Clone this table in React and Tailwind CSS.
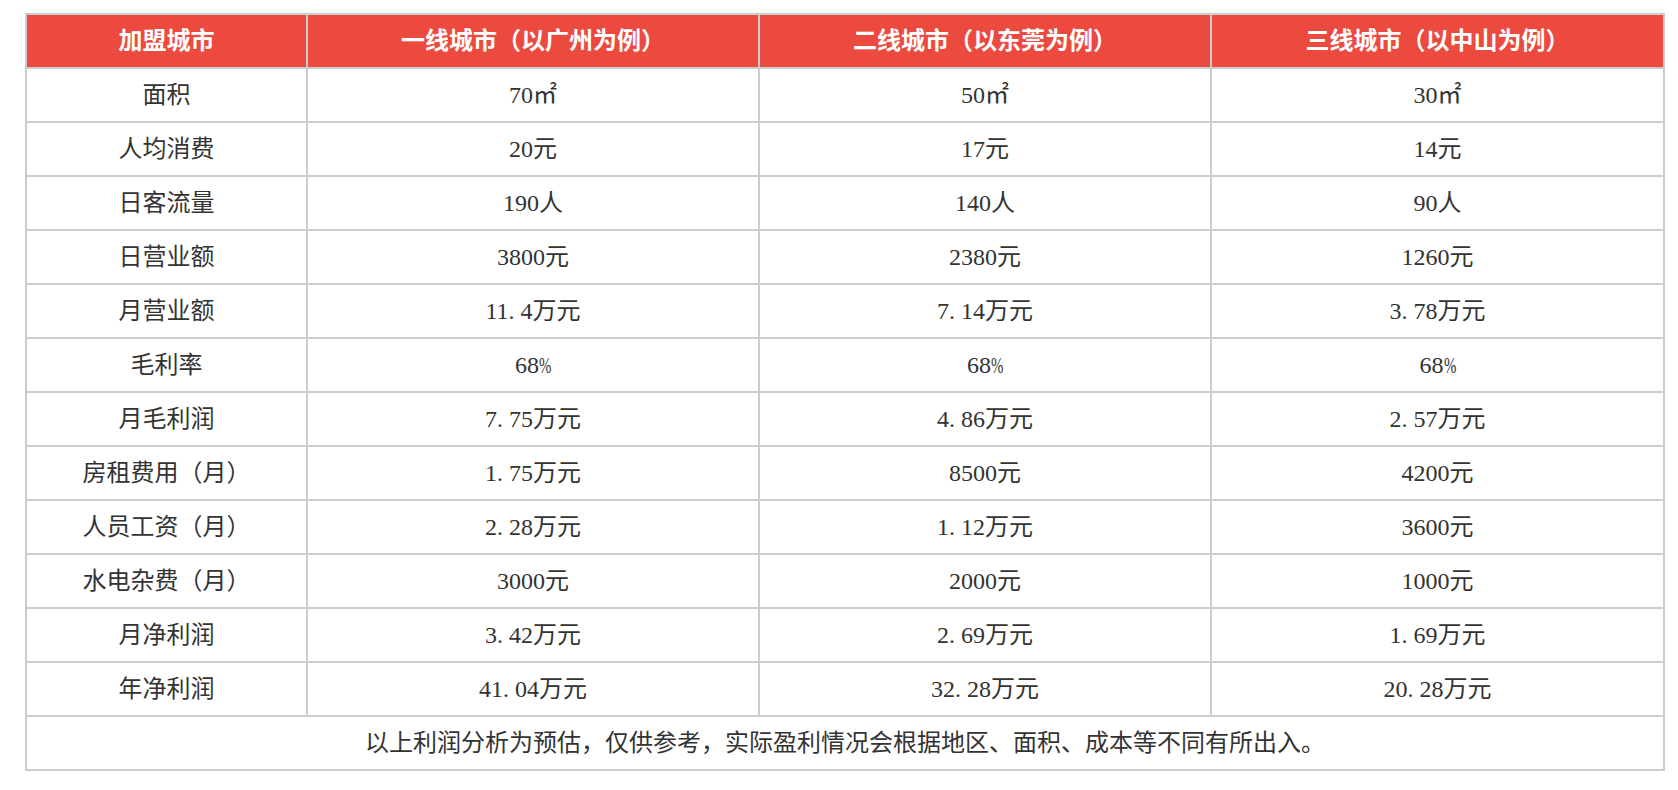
import React from "react";

const header = ["加盟城市", "一线城市（以广州为例）", "二线城市（以东莞为例）", "三线城市（以中山为例）"];
const rows = [
  ["面积", "70㎡", "50㎡", "30㎡"],
  ["人均消费", "20元", "17元", "14元"],
  ["日客流量", "190人", "140人", "90人"],
  ["日营业额", "3800元", "2380元", "1260元"],
  ["月营业额", "11.4万元", "7.14万元", "3.78万元"],
  ["毛利率", "68%", "68%", "68%"],
  ["月毛利润", "7.75万元", "4.86万元", "2.57万元"],
  ["房租费用（月）", "1.75万元", "8500元", "4200元"],
  ["人员工资（月）", "2.28万元", "1.12万元", "3600元"],
  ["水电杂费（月）", "3000元", "2000元", "1000元"],
  ["月净利润", "3.42万元", "2.69万元", "1.69万元"],
  ["年净利润", "41.04万元", "32.28万元", "20.28万元"],
];

function Cell({ text }) {
  const parts = [];
  let buf = "";
  for (const ch of text) {
    if (ch === "." || ch === "%") {
      if (buf) parts.push(buf);
      buf = "";
      parts.push(ch);
    } else buf += ch;
  }
  if (buf) parts.push(buf);
  return (
    <span className="whitespace-nowrap">
      {parts.map((p, i) =>
        p === "." ? (
          <span key={i} className="inline-block w-[12px]">.</span>
        ) : p === "%" ? (
          <span key={i} className="inline-block w-[12px] origin-left [transform:scaleX(0.62)]">%</span>
        ) : (
          <span key={i}>{p}</span>
        )
      )}
    </span>
  );
}

export default function App() {
  return (
    <div className="bg-white w-[1678px] h-[790px] pt-[13px] pl-[25px]">
      <div
        className="grid grid-cols-[279px_450px_450px_451px] auto-rows-[52px] gap-[2px] p-[2px] bg-[#cccccc] w-[1640px] text-[#333333] text-[24px]"
        style={{ fontFamily: '"Liberation Serif", "Noto Sans CJK SC", serif' }}
      >
        {header.map((h, i) => (
          <div key={i} className="bg-[#ec4a3f] text-white font-bold text-[24px] flex items-center justify-center">
            {h}
          </div>
        ))}
        {rows.map((r, ri) =>
          r.map((c, ci) => (
            <div key={ri + "-" + ci} className="bg-white flex items-center justify-center">
              <Cell text={c} />
            </div>
          ))
        )}
        <div className="col-span-4 bg-white flex items-center justify-center">
          以上利润分析为预估，仅供参考，实际盈利情况会根据地区、面积、成本等不同有所出入。
        </div>
      </div>
    </div>
  );
}
